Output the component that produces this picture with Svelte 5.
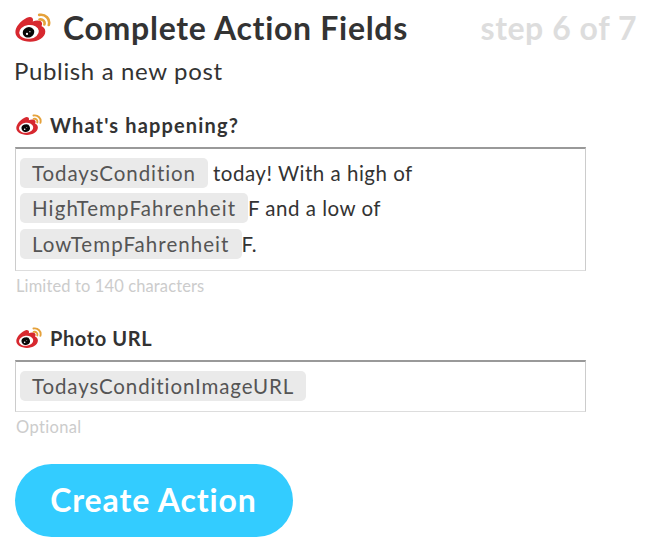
<script>
  const fields = [
    {
      label: "What's happening?",
      kind: 'tall',
      hint: 'Limited to 140 characters',
      lines: [
        { token: 'TodaysCondition', text: 'today! With a high of', cls: 'a' },
        { token: 'HighTempFahrenheit', text: 'F and a low of', cls: 'b' },
        { token: 'LowTempFahrenheit', text: 'F.', cls: 'c' }
      ]
    },
    {
      label: 'Photo URL',
      kind: 'short',
      hint: 'Optional',
      lines: [{ token: 'TodaysConditionImageURL', text: '', cls: 'd' }]
    }
  ];
</script>

{#snippet weibo()}
  <svg class="logo" viewBox="0 0 36 30" aria-hidden="true">
    <path fill="#d7282f" d="M11.800 4.800C15 3.200 18 4 18.100 7L17.700 8.500C21 7 26.200 6.800 27 9.900C27.300 11.200 26.500 12.600 26.600 13.300C28.700 14.100 30.300 15.800 30.300 18.500C30.300 24.400 23.400 28.700 15.200 28.700C7 28.700.4 24.800.4 19.200C.4 14.300 5 8.200 11.800 4.800Z" />
    <ellipse cx="14" cy="18.900" rx="9.900" ry="6.900" fill="#fff" transform="rotate(-7 14 18.900)" />
    <ellipse cx="13.500" cy="19.300" rx="5.900" ry="5.200" fill="#080808" transform="rotate(-20 13.500 19.300)" />
    <circle cx="12" cy="20.900" r="1.100" fill="#fff" />
    <circle cx="14.900" cy="18.700" r=".6" fill="#fff" />
    <path fill="none" stroke="#e5a13a" stroke-width="2.600" stroke-linecap="round" d="M24.200 1.900C30.400.700 35.500 6 33.800 12M24.500 6.500C27.900 5.800 30.300 8.400 29.400 11.500" />
  </svg>
{/snippet}

<main>
  <header>
    {@render weibo()}
    <h1>Complete Action Fields</h1>
    <span class="step">step 6 of 7</span>
  </header>
  <p class="sub">Publish a new post</p>

  {#each fields as field}
    <section class={field.kind}>
      <div class="label">{@render weibo()}<span>{field.label}</span></div>
      <div class="box">
        {#each field.lines as line}
          <div class="line {line.cls}"><span class="token">{line.token}</span><span class="text">{line.text}</span></div>
        {/each}
      </div>
      <div class="hint">{field.hint}</div>
    </section>
  {/each}

  <button>Create Action</button>
</main>

<style>
  :global(body) { margin: 0; background: #fff; }
  main {
    box-sizing: border-box;
    width: 650px;
    height: 544px;
    padding: 7px 13px 0 15px;
    overflow: hidden;
    font-family: Lato, "Open Sans", sans-serif;
    font-variant-ligatures: none;
    color: #333;
    white-space: nowrap;
  }
  header { display: flex; height: 41px; align-items: center; }
  .logo { width: 36px; height: 30px; flex: none; }
  h1 { margin: 0 0 0 12px; font-size: 32px; line-height: 41px; font-weight: 700; letter-spacing: 0.700px; }
  .step { margin-left: auto; font-size: 32px; line-height: 41px; font-weight: 700; letter-spacing: 0.550px; color: #ddd; }
  .sub { margin: 5px 0 0 -1px; font-size: 24px; line-height: 36px; letter-spacing: 0.650px; }
  .tall { margin-top: 22px; }
  .short { margin-top: 23px; }
  .label { box-sizing: border-box; display: flex; align-items: center; height: 36px; padding: 0 0 8px 1px; font-size: 20px; font-weight: 700; }
  .label .logo { width: 26px; height: 22px; }
  .label span { margin-left: 8px; }
  .tall .label { letter-spacing: 1.150px; }
  .short .label { letter-spacing: 0.600px; }
  .box {
    box-sizing: border-box;
    width: 571px;
    border: 1px solid #ccc;
    border-top: 2px solid #999;
    border-bottom-color: #ddd;
    padding: 9px 4px 0;
  }
  .tall .box { height: 124px; }
  .short .box { height: 52px; }
  .line { display: flex; align-items: center; height: 30px; margin-bottom: 5.300px; font-size: 20.500px; }
  .token { box-sizing: border-box; height: 30px; line-height: 30px; padding-left: 12px; border-radius: 5px; background: #eaeaea; color: #555; }
  .text { line-height: 30px; letter-spacing: 0.500px; }
  .a .token { width: 188px; letter-spacing: 0.930px; }
  .a .text { margin-left: 5px; }
  .b .token { width: 228px; letter-spacing: 1.120px; }
  .c .token { width: 221.500px; letter-spacing: 1.050px; }
  .d .token { width: 286px; letter-spacing: 0.880px; }
  .hint { height: 30px; font-size: 16.500px; line-height: 30px; letter-spacing: 0.120px; color: #ccc; padding-left: 1px; }
  .short .hint { letter-spacing: 0.350px; }
  button {
    display: block;
    width: 278px;
    height: 73px;
    margin: 22px 0 0 -0.500px;
    padding: 0 0 2px;
    border: 0;
    border-radius: 37px;
    background: #3cf;
    color: #fff;
    font: 700 32px/71px Lato, "Open Sans", sans-serif;
    letter-spacing: 0.900px;
    font-variant-ligatures: none;
  }
</style>
